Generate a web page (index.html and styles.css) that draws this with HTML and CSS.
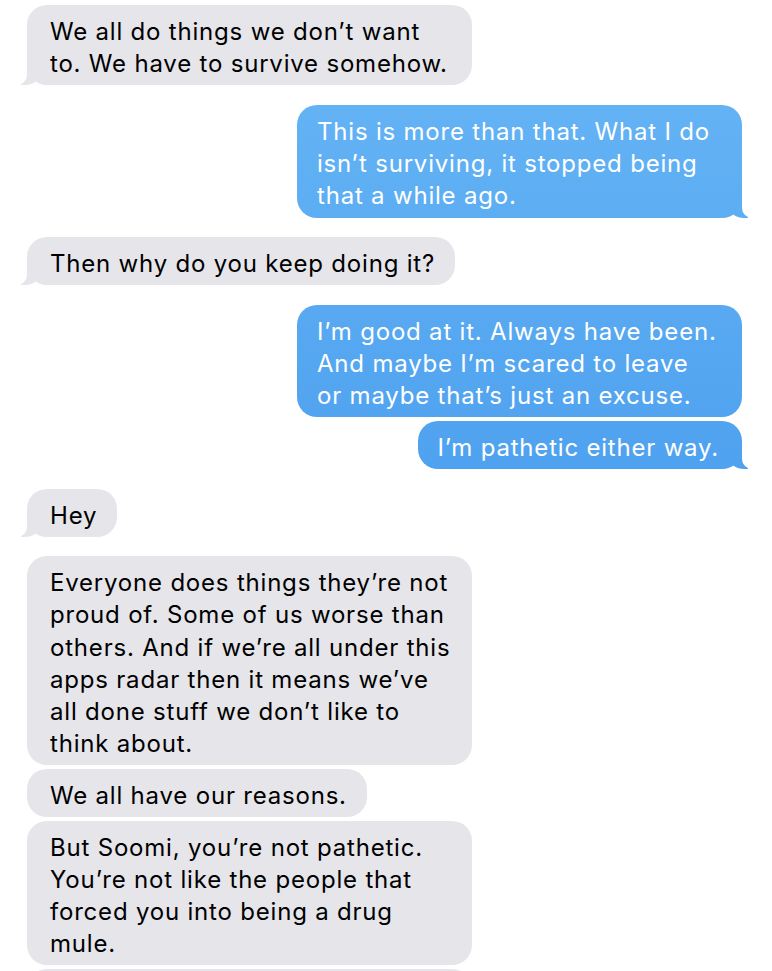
FILE: index.html
```html
<!DOCTYPE html>
<html lang="en">
<head>
<meta charset="UTF-8">
<meta name="viewport" content="width=device-width, initial-scale=1.0">
<title>Messages</title>
<link rel="stylesheet" href="styles.css">
</head>
<body>

<!-- Conversation -->
<div class="thread">
    <div class="msg them tail wide">We all do things we don’t want<br>to. We have to survive somehow.</div>

    <div class="msg me tail wide group">This is more than that. What I do<br>isn’t surviving, it stopped being<br>that a while ago.</div>

    <div class="msg them tail group">Then why do you keep doing it?</div>

    <div class="msg me wide group">I’m good at it. Always have been.<br>And maybe I’m scared to leave<br>or maybe that’s just an excuse.</div>
    <div class="msg me tail">I’m pathetic either way.</div>

    <div class="msg them tail group">Hey</div>

    <div class="msg them wide group">Everyone does things they’re not<br>proud of. Some of us worse than<br>others. And if we’re all under this<br>apps radar then it means we’ve<br>all done stuff we don’t like to<br>think about.</div>
    <div class="msg them">We all have our reasons.</div>
    <div class="msg them wide">But Soomi, you’re not pathetic.<br>You’re not like the people that<br>forced you into being a drug<br>mule.</div>
    <div class="msg them wide">&nbsp;<br>&nbsp;</div>
</div>

</body>
</html>
```

FILE: styles.css
```css
/* General Styles */
* {
    margin: 0;
    padding: 0;
    box-sizing: border-box;
}

html, body {
    height: 100%;
    overflow: hidden;
}

body {
    background: #fff;
    font-family: 'Inter', 'Noto Sans', sans-serif;
}

/* Thread */
.thread {
    display: flex;
    flex-direction: column;
    padding: 5px 30px 0 27px;
}

/* Bubbles */
.msg {
    position: relative;
    max-width: 445px;
    padding: 11px 20px 5px 23px;
    border-radius: 20px;
    font-size: 24px;
    line-height: 32.2px;
    letter-spacing: 0.8px;
    white-space: nowrap;
    margin-top: 3.5px;
}

.msg:first-child {
    margin-top: 0;
}

.msg.group {
    margin-top: 19.5px;
}

.msg.wide {
    width: 445px;
}

.them {
    align-self: flex-start;
    background: #e5e5ea;
    color: #000;
}

.me {
    align-self: flex-end;
    padding: 11px 23px 5px 20px;
    background: linear-gradient(to bottom, #69b7f6, #338be8) fixed;
    color: #fff;
}

/* Tails */
.tail::before,
.tail::after {
    content: "";
    position: absolute;
    bottom: 0;
    height: 22px;
}

.them.tail::before {
    left: -6px;
    width: 20px;
    background: #e5e5ea;
    border-bottom-right-radius: 16px 14px;
}

.them.tail::after {
    left: -26px;
    width: 26px;
    background: #fff;
    border-bottom-right-radius: 10px;
}

.me.tail::before {
    right: -6px;
    width: 20px;
    background: linear-gradient(to bottom, #69b7f6, #338be8) fixed;
    border-bottom-left-radius: 16px 14px;
}

.me.tail::after {
    right: -26px;
    width: 26px;
    background: #fff;
    border-bottom-left-radius: 10px;
}
```
